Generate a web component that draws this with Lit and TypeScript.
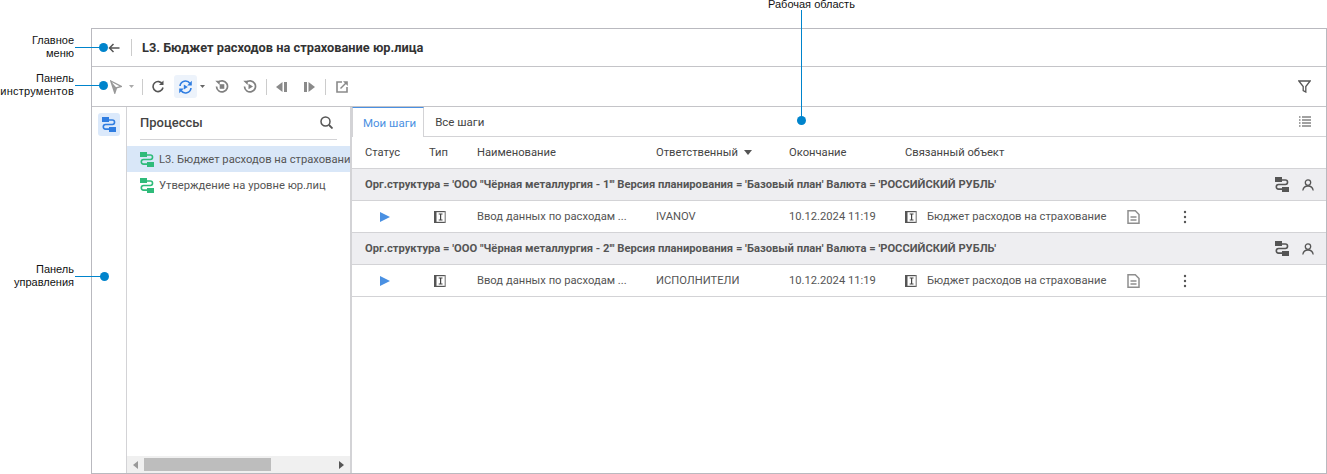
import { LitElement, html, css, svg } from "lit";
import { customElement } from "lit/decorators.js";

const ico = (w: number, h: number, body: unknown, cls = "") =>
  html`<svg class="ico ${cls}" width=${w} height=${h} viewBox="0 0 ${w} ${h}" fill="none">${body}</svg>`;

const proc = (c: string, dark = c) =>
  ico(14, 15, svg`<rect x="0" y="0" width="7" height="5" fill=${dark}/><rect x="7" y="10" width="7" height="5" fill=${dark}/><path d="M5 3H10.300a2.200 2.200 0 0 1 0 4.500H3.600a2.300 2.300 0 0 0 0 4.600H9" stroke=${c} stroke-width="1.600"/>`);

const typeIcon = () =>
  ico(12, 12, svg`<rect x="0" y="0" width="12" height="12" fill="#555"/><rect x="2.500" y="1.200" width="8.300" height="9.600" fill="#fff"/><rect x="10.800" y="0" width="1.200" height="12" fill="#999"/><path d="M4.700 3H8.500M4.700 9H8.500M6.600 3V9" stroke="#444" stroke-width="1.200"/>`);

const playIcon = () => ico(10, 10, svg`<path d="M0 0L10 5L0 10Z" fill="#4a90e2"/>`);
const docIcon = () =>
  ico(13, 14, svg`<path d="M1 .8H8.300L12 4.500V13.200H1Z" stroke="#8e8e8e" stroke-width="1.500"/><path d="M3.500 7H9.500M3.500 10H9.500" stroke="#8e8e8e" stroke-width="1.400"/>`);
const dotsIcon = () =>
  ico(4, 14, svg`<circle cx="2" cy="2" r="1.200" fill="#555"/><circle cx="2" cy="7" r="1.200" fill="#555"/><circle cx="2" cy="12" r="1.200" fill="#555"/>`);
const userIcon = () =>
  ico(12, 12, svg`<circle cx="6" cy="3.600" r="2.700" stroke="#555" stroke-width="1.300"/><path d="M.8 11.500C1.300 8.600 3.200 7 6 7s4.700 1.600 5.200 4.500" stroke="#555" stroke-width="1.300"/>`);
const caret = (c = "#999") => ico(5, 3, svg`<path d="M0 0H5L2.500 3Z" fill=${c}/>`);

const groups = [
  { n: "1", who: "IVANOV" },
  { n: "2", who: "ИСПОЛНИТЕЛИ" },
];

@customElement("app-root")
export class AppRoot extends LitElement {
  static styles = css`
    :host {
      display: block;
      font-family: Roboto, "Liberation Sans", sans-serif;
      color: #333;
    }
    .page {
      position: relative;
      box-sizing: border-box;
      width: 1327px;
      height: 474px;
      padding: 28px 0 0 91px;
      background: #fff;
      overflow: hidden;
    }
    .frame {
      box-sizing: border-box;
      height: 446px;
      border: 1px solid #b9b9bf;
      display: flex;
      flex-direction: column;
    }
    .ico { display: block; flex: none; }
    .title {
      height: 37px;
      flex: none;
      border-bottom: 1px solid #c4c4c8;
      display: flex;
      align-items: center;
      padding-left: 16px;
    }
    .title .v { width: 1px; height: 17px; background: #ccc; margin: 0 10px 0 11px; }
    .title b { font-size: 12.8px; font-weight: 700; color: #333; }
    .toolbar {
      height: 39px;
      flex: none;
      border-bottom: 1px solid #c4c4c8;
      display: flex;
      align-items: center;
      padding-left: 18px;
    }
    .sep { width: 1px; height: 16px; background: #ccc; flex: none; }
    .active {
      width: 23px;
      height: 23px;
      background: #edf3fb;
      border-radius: 3px;
      display: flex;
      align-items: center;
      justify-content: center;
      flex: none;
    }
    .m3 { margin-left: 3px; } .m7 { margin-left: 7px; } .m8 { margin-left: 8px; }
    .m9 { margin-left: 9px; } .m10 { margin-left: 10px; } .m14 { margin-left: 14px; } .m17 { margin-left: 17px; }
    .filter { margin-left: auto; margin-right: 15px; }
    .body { flex: 1; display: flex; min-height: 0; }
    .rail {
      flex: none;
      border-right: 1px solid #d3d3d6;
      padding: 6px 0 0 6px;
      width: 28px;
    }
    .railbtn {
      width: 22px;
      height: 23px;
      background: #dbe9fb;
      border-radius: 3px;
      display: flex;
      align-items: center;
      justify-content: center;
    }
    .tree {
      width: 223px;
      flex: none;
      border-right: 2px solid #d3d3d6;
      display: flex;
      flex-direction: column;
      overflow: hidden;
    }
    .treehead {
      margin: 0 13px;
      height: 30px;
      padding-bottom: 2px;
      border-bottom: 1px solid #d3d3d6;
      display: flex;
      align-items: center;
      justify-content: space-between;
      flex: none;
    }
    .treehead b { font-size: 13px; font-weight: 500; color: #444; }
    .treehead svg { margin-right: 4px; }
    .node {
      height: 26px;
      display: flex;
      align-items: center;
      padding-left: 13px;
      gap: 5px;
      font-size: 11.2px;
      color: #555;
      white-space: nowrap;
      flex: none;
      overflow: hidden;
    }
    .node.sel { background: #d9e7f8; margin-top: 6px; }
    .spacer { flex: 1; }
    .hscroll {
      height: 17px;
      background: #f0f0f0;
      display: flex;
      align-items: center;
      flex: none;
      padding: 0 6px;
      justify-content: space-between;
    }
    .thumb { width: 127px; height: 13px; background: #bdbdbd; margin: 0 auto 0 6px; }
    .main { flex: 1; min-width: 0; display: flex; flex-direction: column; }
    .tabs {
      height: 29px;
      flex: none;
      border-bottom: 1px solid #d3d3d6;
      display: flex;
      align-items: stretch;
      font-size: 11.5px;
    }
    .tab { padding: 0 11px 0 11px; display: flex; align-items: center; color: #444; }
    .tab.on {
      color: #4a90e2;
      border-top: 1px solid #4a90e2;
      border-right: 1px solid #d3d3d6;
      border-left: 1px solid #d3d3d6;
      padding: 0 7px 0 10px;
      margin-bottom: -1px;
      background: #fff;
    }
    .tabs .list { margin: auto 15px auto auto; }
    .cols {
      display: grid;
      grid-template-columns: 64px 48px 179px 133px 116px 222px 56px 1fr;
      align-items: center;
      height: 31px;
      border-bottom: 1px solid #d3d3d6;
      padding-left: 13px;
      font-size: 11.2px;
      color: #555;
      white-space: nowrap;
    }
    .head { color: #444; }
    .sorted { display: flex; align-items: center; gap: 6px; }
    .group {
      height: 31px;
      background: #eeeef1;
      border-bottom: 1px solid #d3d3d6;
      padding: 0 12px 0 13px;
      display: flex;
      align-items: center;
      font-size: 11.2px;
      font-weight: 700;
      color: #555;
      white-space: nowrap;
    }
    .group .acts { margin-left: auto; display: flex; align-items: center; gap: 13px; }
    .play { padding-left: 15px; }
    .typ { padding-left: 5px; }
    .obj { display: flex; align-items: center; gap: 10px; }
    .note { position: absolute; font-family: "Liberation Sans", Arial, sans-serif; font-size: 11px; line-height: 13px; color: #111; text-align: right; right: calc(100% - 74px); white-space: nowrap; }
    .note.top { left: 768px; right: auto; top: 0; line-height: 9px; }
    .wide { letter-spacing: .25px; }
    .n1 { top: 34px; } .n2 { top: 72px; } .n3 { top: 263px; }
    .dot { position: absolute; width: 9px; height: 9px; border-radius: 50%; background: #0084cc; }
    .hline { position: absolute; height: 1px; background: #0084cc; left: 75px; width: 28px; }
    .vline { position: absolute; width: 1px; background: #0084cc; left: 801px; top: 10px; height: 110px; }
  `;

  render() {
    return html`<div class="page">
      <div class="frame">
        <div class="title">
          ${ico(12, 10, svg`<path d="M11.500 5H1.500M5.500 1L1.500 5L5.500 9" stroke="#555" stroke-width="1.500"/>`)}
          <span class="v"></span>
          <b>L3. Бюджет расходов на страхование юр.лица</b>
        </div>
        <div class="toolbar">
          ${ico(12, 14, svg`<path d="M.8 1L11.300 6.500L6.500 7.800L4.800 13Z" stroke="#999" stroke-width="1.400"/><path d="M1 1.500L6.500 7.800L4.800 12.500Z" fill="#999"/>`)}
          <span class="m7">${caret("#aaa")}</span>
          <span class="sep m8"></span>
          <span class="m9">${ico(12, 13, svg`<path d="M10.500 4.200A5 5 0 1 0 11 7.500" stroke="#555" stroke-width="1.600"/><path d="M11.500 .5V5H7Z" fill="#555"/>`)}</span>
          <span class="active m10">${ico(15, 14, svg`<path d="M2 6A5.500 5.500 0 0 1 12 3.500M13 8A5.500 5.500 0 0 1 3 10.500" stroke="#2f7de1" stroke-width="1.600"/><path d="M13.800 .8V5.500H9.200ZM1.200 13.200V8.500H5.800Z" fill="#2f7de1"/><path d="M5.800 4.500L9.800 7L5.800 9.500Z" fill="#2f7de1"/>`)}</span>
          <span class="m3">${caret("#666")}</span>
          <span class="m10">${ico(14, 13, svg`<path d="M3 2.600A5.500 5.500 0 1 1 1.500 6.500" stroke="#808080" stroke-width="1.700"/><path d="M.3 .8H4.700V5Z" fill="#808080"/><rect x="4.700" y="4.200" width="4.600" height="4.600" fill="#808080"/>`)}</span>
          <span class="m14">${ico(14, 13, svg`<path d="M3 2.600A5.500 5.500 0 1 1 1.500 6.500" stroke="#808080" stroke-width="1.700"/><path d="M.3 .8H4.700V5Z" fill="#808080"/><path d="M5.500 3.800L10 6.500L5.500 9.200Z" fill="#808080"/>`)}</span>
          <span class="sep m9"></span>
          <span class="m9">${ico(11, 10, svg`<path d="M6.500 0V10L0 5Z" fill="#8a8a8a"/><rect x="8" y="0" width="3" height="10" fill="#8a8a8a"/>`)}</span>
          <span class="m17">${ico(11, 10, svg`<path d="M4.500 0V10L11 5Z" fill="#8a8a8a"/><rect x="0" y="0" width="3" height="10" fill="#8a8a8a"/>`)}</span>
          <span class="sep m10"></span>
          <span class="m10">${ico(12, 12, svg`<path d="M6 1H1V11H11V6" stroke="#8a8a8a" stroke-width="1.600"/><path d="M4.500 7.500L10.500 1.500" stroke="#8a8a8a" stroke-width="1.500"/><path d="M7 .2H11.800V5Z" fill="#8a8a8a"/>`)}</span>
          <span class="filter">${ico(13, 13, svg`<path d="M.8 1H12.200L7.800 6.500V12L5.200 10.500V6.500Z" stroke="#555" stroke-width="1.300"/>`)}</span>
        </div>
        <div class="body">
          <div class="rail"><div class="railbtn">${proc("#2f7de1")}</div></div>
          <div class="tree">
            <div class="treehead">
              <b>Процессы</b>
              ${ico(13, 13, svg`<circle cx="5.500" cy="5.500" r="4.500" stroke="#555" stroke-width="1.500"/><path d="M9 9L12.500 12.500" stroke="#555" stroke-width="1.800"/>`)}
            </div>
            <div class="node sel">${proc("#2fbb7a")}<span>L3. Бюджет расходов на страхование юр.лица</span></div>
            <div class="node">${proc("#2fbb7a")}<span>Утверждение на уровне юр.лиц</span></div>
            <div class="spacer"></div>
            <div class="hscroll">
              ${ico(5, 8, svg`<path d="M5 0V8L0 4Z" fill="#999"/>`)}
              <span class="thumb"></span>
              ${ico(5, 8, svg`<path d="M0 0V8L5 4Z" fill="#555"/>`)}
            </div>
          </div>
          <div class="main">
            <div class="tabs">
              <div class="tab on">Мои шаги</div>
              <div class="tab">Все шаги</div>
              <span class="list">${ico(12, 11, svg`<path d="M3 1H12M3 4H12M3 7H12M3 10H12" stroke="#444" stroke-width="1"/><path d="M0 1H1.500M0 4H1.500M0 7H1.500M0 10H1.500" stroke="#444" stroke-width="1"/>`)}</span>
            </div>
            <div class="cols head">
              <span>Статус</span><span>Тип</span><span>Наименование</span>
              <span class="sorted">Ответственный ${ico(8, 5, svg`<path d="M0 0H8L4 5Z" fill="#555"/>`)}</span>
              <span>Окончание</span><span>Связанный объект</span><span></span><span></span>
            </div>
            ${groups.map(
              (g) => html`
                <div class="group">
                  <span>Орг.структура = 'ООО "Чёрная металлургия - ${g.n}'" Версия планирования = 'Базовый план' Валюта = 'РОССИЙСКИЙ РУБЛЬ'</span>
                  <span class="acts">${proc("#555")}${userIcon()}</span>
                </div>
                <div class="cols">
                  <span class="play">${playIcon()}</span>
                  <span class="typ">${typeIcon()}</span>
                  <span>Ввод данных по расходам ...</span>
                  <span>${g.who}</span>
                  <span>10.12.2024 11:19</span>
                  <span class="obj">${typeIcon()}<span>Бюджет расходов на страхование</span></span>
                  <span>${docIcon()}</span>
                  <span>${dotsIcon()}</span>
                </div>
              `
            )}
          </div>
        </div>
      </div>
      <div class="note n1">Главное<br />меню</div>
      <div class="note n2">Панель<br /><span class="wide">инструментов</span></div>
      <div class="note n3">Панель<br />управления</div>
      <div class="note top">Рабочая область</div>
      <span class="hline" style="top:47px"></span><span class="dot" style="left:99px;top:43px"></span>
      <span class="hline" style="top:85px"></span><span class="dot" style="left:99px;top:81px"></span>
      <span class="hline" style="top:276px"></span><span class="dot" style="left:100px;top:272px"></span>
      <span class="vline"></span><span class="dot" style="left:797px;top:116px"></span>
    </div>`;
  }
}
